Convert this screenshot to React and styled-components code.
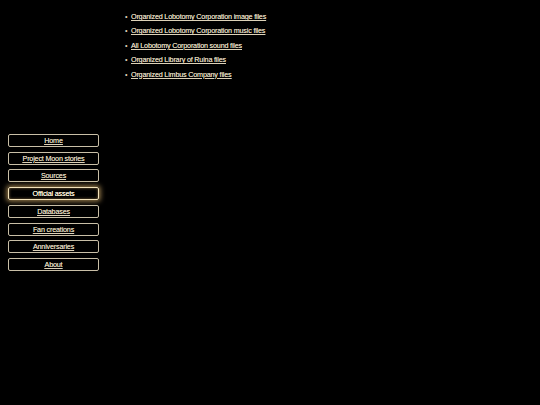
import React from 'react';
import styled, { createGlobalStyle } from 'styled-components';

const GlobalStyle = createGlobalStyle`
    html, body {
        margin: 0;
        padding: 0;
        background: #000;
    }
    body {
        font-family: "Liberation Sans", Arial, sans-serif;
        color: #ddd2b8;
        -webkit-font-smoothing: antialiased;
    }
`;

const Page = styled.div`
    display: grid;
    grid-template-columns: 108px 1fr;
    min-height: 100vh;
`;

const Sidebar = styled.nav`
    display: flex;
    flex-direction: column;
    justify-content: center;
    gap: 4.7px;
    padding-left: 8px;
`;

const NavButton = styled.a`
    display: block;
    box-sizing: border-box;
    width: 91px;
    height: 13px;
    line-height: 11px;
    border: 1px solid ${props => props.$active ? '#f3e3bb' : '#c9bfa7'};
    border-radius: 2px;
    text-align: center;
    font-size: 7.2px;
    letter-spacing: -0.18px;
    color: ${props => props.$active ? '#fbf1da' : '#ddd2b8'};
    text-decoration: ${props => props.$active ? 'none' : 'underline'};
    text-shadow: 0 0 0.3px currentColor;
    box-shadow: ${props => props.$active
        ? '0 0 5px 1.5px rgba(255, 208, 128, 0.6), inset 0 0 3px rgba(255, 208, 128, 0.5)'
        : 'none'};
    cursor: pointer;
`;

const Content = styled.main`
    padding-top: 10px;
`;

const FileList = styled.ul`
    margin: 0;
    padding-left: 23px;
    list-style: none;
`;

const FileItem = styled.li`
    font-size: 7.2px;
    letter-spacing: -0.18px;
    line-height: 14.4px;

    &::before {
        content: "•";
        display: inline-block;
        width: 6px;
        margin-left: -6px;
    }
`;

const FileLink = styled.a`
    color: #ddd2b8;
    text-decoration: underline;
    text-shadow: 0 0 0.3px currentColor;
    cursor: pointer;
`;

const navItems = [
    'Home',
    'Project Moon stories',
    'Sources',
    'Official assets',
    'Databases',
    'Fan creations',
    'Anniversaries',
    'About',
];

const files = [
    'Organized Lobotomy Corporation image files',
    'Organized Lobotomy Corporation music files',
    'All Lobotomy Corporation sound files',
    'Organized Library of Ruina files',
    'Organized Limbus Company files',
];

const App = () => {
    return (
        <Page>
            <GlobalStyle />
            <Sidebar>
                {navItems.map(item => (
                    <NavButton key={item} $active={item === 'Official assets'}>
                        {item}
                    </NavButton>
                ))}
            </Sidebar>
            <Content>
                <FileList>
                    {files.map(file => (
                        <FileItem key={file}>
                            <FileLink>{file}</FileLink>
                        </FileItem>
                    ))}
                </FileList>
            </Content>
        </Page>
    );
}

export default App;
